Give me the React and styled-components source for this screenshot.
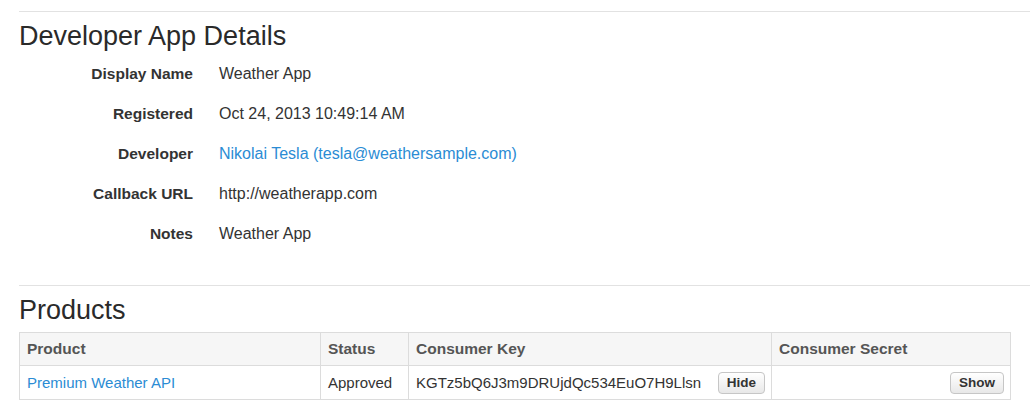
import React from 'react';
import styled, { createGlobalStyle } from 'styled-components';

const GlobalStyle = createGlobalStyle`
  body {
    margin: 0;
    background: #fff;
    font-family: "Liberation Sans", Arial, sans-serif;
    color: #333;
  }
`;

const Page = styled.div`
  padding: 11px 0 0 19px;
`;

const Rule = styled.hr`
  margin: 0;
  border: 0;
  border-top: 1px solid #e2e2e2;
`;

const Heading = styled.h2`
  margin: 7px 0 ${(p) => p.$gap}px;
  font-size: 27px;
  font-weight: normal;
  line-height: 34px;
  color: #2a2a2a;
`;

const Details = styled.dl`
  display: grid;
  grid-template-columns: 174px 1fr;
  grid-auto-rows: 40px;
  column-gap: 26px;
  margin: 0 0 31px;
`;

const Label = styled.dt`
  display: flex;
  align-items: center;
  justify-content: flex-end;
  font-size: 15.5px;
  font-weight: bold;
  color: #333;
`;

const Value = styled.dd`
  display: flex;
  align-items: center;
  margin: 0;
  font-size: 16px;
  color: #333;
`;

const Link = styled.a`
  color: #2b8cd4;
  text-decoration: none;
`;

const Table = styled.table`
  width: 991px;
  table-layout: fixed;
  border-collapse: collapse;
  border: 1px solid #dcdcdc;
  font-size: 15px;
`;

const Col = styled.col`
  width: ${(p) => p.$w}px;
`;

const HeadCell = styled.th`
  height: 32px;
  padding: 0 7px;
  text-align: left;
  font-size: 15.5px;
  font-weight: bold;
  color: #555;
  background: #f6f6f6;
  border: 1px solid #dcdcdc;
`;

const Cell = styled.td`
  height: 33px;
  padding: 0 6px 0 7px;
  border: 1px solid #dcdcdc;
  color: #333;
  white-space: nowrap;
`;

const CellInner = styled.div`
  display: flex;
  align-items: center;
  justify-content: ${(p) => (p.$end ? 'flex-end' : 'space-between')};
`;

const Button = styled.button`
  height: 22px;
  padding: 0 8px;
  font-family: "Liberation Sans", Arial, sans-serif;
  font-size: 13.5px;
  font-weight: bold;
  color: #333;
  border: 1px solid #c6c6c6;
  border-radius: 4px;
  background: linear-gradient(#ffffff, #e8e8e8);
  cursor: pointer;
`;

const details = [
  ['Display Name', 'Weather App'],
  ['Registered', 'Oct 24, 2013 10:49:14 AM'],
  ['Developer', <Link href="#">Nikolai Tesla (tesla@weathersample.com)</Link>],
  ['Callback URL', 'http://weatherapp.com'],
  ['Notes', 'Weather App'],
];

export default function App() {
  return (
    <>
      <GlobalStyle />
      <Page>
        <Rule />
        <Heading $gap={1}>Developer App Details</Heading>
        <Details>
          {details.map(([label, value]) => (
            <React.Fragment key={label}>
              <Label>{label}</Label>
              <Value>{value}</Value>
            </React.Fragment>
          ))}
        </Details>
        <Rule />
        <Heading $gap={5}>Products</Heading>
        <Table>
          <colgroup>
            <Col $w={301} />
            <Col $w={88} />
            <Col $w={363} />
            <Col $w={239} />
          </colgroup>
          <thead>
            <tr>
              <HeadCell>Product</HeadCell>
              <HeadCell>Status</HeadCell>
              <HeadCell>Consumer Key</HeadCell>
              <HeadCell>Consumer Secret</HeadCell>
            </tr>
          </thead>
          <tbody>
            <tr>
              <Cell><Link href="#">Premium Weather API</Link></Cell>
              <Cell>Approved</Cell>
              <Cell>
                <CellInner>
                  <span>KGTz5bQ6J3m9DRUjdQc534EuO7H9Llsn</span>
                  <Button>Hide</Button>
                </CellInner>
              </Cell>
              <Cell>
                <CellInner $end>
                  <Button>Show</Button>
                </CellInner>
              </Cell>
            </tr>
          </tbody>
        </Table>
      </Page>
    </>
  );
}
